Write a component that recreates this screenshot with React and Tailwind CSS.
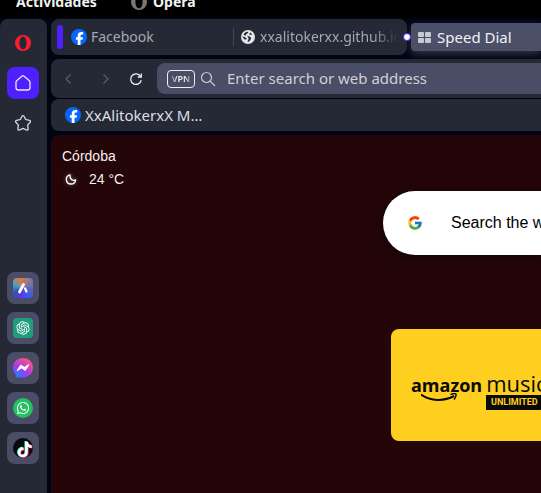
import React from "react";
import { FcGoogle } from "react-icons/fc";
import { FaWhatsapp, FaTiktok } from "react-icons/fa";
import { RiOpenaiFill } from "react-icons/ri";

function FacebookIcon() {
  return (
    <svg viewBox="0 0 16 16" className="size-4 shrink-0" aria-hidden="true">
      <circle cx="8" cy="8" r="8" fill="#0866ff" />
      <path
        d="M6.7 16v-5.3H4.9V8.2h1.8V7c0-2.7 1.2-3.9 3.8-3.9.5 0 1.3.1 1.7.2v2.2h-.9c-1.3 0-1.8.5-1.8 1.7v1H12l-.4 2.5H9.5V16z"
        fill="#fff"
      />
    </svg>
  );
}

function GlobeIcon() {
  return (
    <svg viewBox="0 0 14 14" className="size-[14px] shrink-0" aria-hidden="true">
      <circle cx="7" cy="7" r="7" fill="#e4e6ea" />
      <path d="M3 3.400 5.800 1.600 7.500 2.400 5.500 4 4.600 5.400 2.800 5.200z" fill="#252936" />
      <path d="M1.200 6.200 3.400 7 5.600 8.200 5.400 9.400 3.400 9.600z" fill="#252936" />
      <path d="M6 5.800 8.600 6.400 10.200 8 9.400 10 7.400 12 6.400 11.400 7.400 9.400 7.600 8z" fill="#252936" />
      <path d="M9 2.600 11 4 10.200 5 8.200 4.400z" fill="#252936" />
    </svg>
  );
}

function OperaIcon({ className, color }) {
  return (
    <svg viewBox="0 0 16 16" className={className} aria-hidden="true">
      <path
        fill={color}
        fillRule="evenodd"
        d="M8 0a8 8 0 1 0 0 16A8 8 0 0 0 8 0M8 1.700c2.200 0 3.600 2.700 3.600 6.300s-1.400 6.300-3.600 6.300-3.600-2.700-3.600-6.300S5.800 1.700 8 1.700"
      />
    </svg>
  );
}

function AriaIcon() {
  return (
    <span className="grid size-5 place-items-center overflow-hidden rounded bg-[conic-gradient(from_20deg,#9a8190,#5262b8_25%,#3a55ff_38%,#5e35d8_50%,#2a55b5_62%,#4aa3b9_75%,#d27b54_88%,#c96f4c)]">
      <svg viewBox="0 0 20 20" className="size-5" fill="none" stroke="#fff" strokeLinecap="round" aria-hidden="true">
        <path d="M6.500 14 10.500 6.500" strokeWidth="2.800" />
        <path d="M12 10.500 13.500 13.500" strokeWidth="2.200" />
      </svg>
    </span>
  );
}

function MessengerIcon() {
  return (
    <svg viewBox="0 0 24 24" className="size-5" aria-hidden="true">
      <defs>
        <radialGradient id="messenger" cx=".15" cy="1" r="1.150">
          <stop offset="0" stopColor="#0695ff" />
          <stop offset=".5" stopColor="#a334fa" />
          <stop offset="1" stopColor="#ff5c70" />
        </radialGradient>
      </defs>
      <path d="M4 6h16v11H4z" fill="#fff" />
      <path
        fill="url(#messenger)"
        d="M12 0C5.24 0 0 4.952 0 11.64c0 3.499 1.434 6.521 3.769 8.61a.96.96 0 0 1 .323.683l.065 2.135a.96.96 0 0 0 1.347.85l2.381-1.053a.96.96 0 0 1 .641-.046A13 13 0 0 0 12 23.28c6.76 0 12-4.952 12-11.64S18.76 0 12 0m6.806 7.44c.522-.03.971.567.63 1.094l-4.178 6.457a.707.707 0 0 1-.977.208l-3.87-2.504a.44.44 0 0 0-.49.007l-4.363 3.01c-.637.438-1.415-.317-.995-.966l4.179-6.457a.706.706 0 0 1 .977-.21l3.87 2.505c.15.097.344.094.491-.007l4.362-3.008a.7.7 0 0 1 .364-.13"
      />
    </svg>
  );
}

const apps = [
  { name: "Aria", icon: <AriaIcon /> },
  {
    name: "ChatGPT",
    icon: (
      <span className="grid size-5 place-items-center rounded bg-[#219c7d] text-white">
        <RiOpenaiFill className="size-4" />
      </span>
    ),
  },
  { name: "Messenger", icon: <MessengerIcon /> },
  {
    name: "WhatsApp",
    icon: (
      <span className="grid size-5 place-items-center rounded-full bg-[#25c160] text-white">
        <FaWhatsapp className="size-[14px]" />
      </span>
    ),
  },
  {
    name: "TikTok",
    icon: (
      <span className="grid size-5 place-items-center rounded-full bg-[#080a0c]">
        <svg viewBox="0 0 20 20" className="size-5" aria-hidden="true">
          <FaTiktok x="3" y="3" width="13" height="13" color="#25f4ee" />
          <FaTiktok x="4.500" y="4" width="13" height="13" color="#fe2c55" />
          <FaTiktok x="3.700" y="3.500" width="13" height="13" color="#fff" />
        </svg>
      </span>
    ),
  },
];

function Sidebar() {
  return (
    <aside className="flex w-[47px] shrink-0 flex-col items-start rounded-t-lg bg-[#252936] pt-2 pb-[29px] pl-[7px]">
      <nav className="flex flex-col gap-2" aria-label="Sidebar">
        <button className="grid size-8 place-items-center" aria-label="Opera menu">
          <OperaIcon className="size-4" color="#ff1b2d" />
        </button>
        <button className="grid size-8 place-items-center rounded-lg bg-[#4f20ff]" aria-label="Home">
          <svg viewBox="0 0 16 16" className="size-4" fill="none" stroke="#eeeaff" strokeWidth="1.300" strokeLinejoin="round" aria-hidden="true">
            <path d="M7.200 1 1.900 5.400c-.6.500-.9 1-.9 1.800v5.300C1 14 2 15 3.500 15h9c1.500 0 2.500-1 2.500-2.500V7.200c0-.8-.3-1.300-.9-1.800L8.800 1c-.5-.4-1.100-.4-1.600 0z" />
          </svg>
        </button>
        <button className="grid size-8 place-items-center" aria-label="Pinboards">
          <svg viewBox="0 0 18 18" className="size-[18px]" fill="none" stroke="#d9dbe2" strokeWidth="1.300" strokeLinejoin="round" aria-hidden="true">
            <path d="M8 2.300c.4-.8 1.600-.8 2 0l1.500 2.800c.2.300.5.500.8.600l3.200.6c.9.200 1.300 1.200.7 1.900l-2.200 2.400c-.2.300-.3.600-.3.900l.4 3.300c.1.900-.8 1.600-1.600 1.200l-3-1.400a1.200 1.200 0 0 0-1 0L5.500 16c-.8.400-1.700-.3-1.600-1.200l.4-3.300c0-.3-.1-.6-.3-.9L1.800 8.200c-.6-.7-.2-1.700.7-1.900l3.200-.6c.3-.1.600-.3.800-.6z" />
          </svg>
        </button>
      </nav>
      <div className="mt-auto flex flex-col gap-2">
        {apps.map((app) => (
          <button key={app.name} aria-label={app.name} className="grid size-8 place-items-center rounded-lg bg-[#4a4d65]">
            {app.icon}
          </button>
        ))}
      </div>
    </aside>
  );
}

function Tabs() {
  return (
    <div className="flex h-9 items-center gap-1" role="tablist">
      <div className="relative flex h-9 w-[356px] shrink-0 items-center rounded-lg bg-[#252936] pl-[6px] text-sm text-[#a6a8ad]">
        <span className="h-6 w-[6px] rounded-sm bg-[#4f20ff]" />
        <button role="tab" aria-selected="false" className="ml-2 flex w-[162px] items-center gap-1">
          <FacebookIcon />
          Facebook
        </button>
        <span className="h-[18px] w-px bg-[#454854]" />
        <button
          role="tab"
          aria-selected="false"
          className="ml-[7px] flex min-w-0 flex-1 items-center gap-[5px] overflow-hidden whitespace-nowrap"
        >
          <GlobeIcon />
          <span className="w-[139px] overflow-hidden text-left [mask-image:linear-gradient(to_right,#000_112px,transparent_139px)]">
            xxalitokerxx.github.io
          </span>
        </button>
        <span className="absolute top-[14px] -right-1 size-2 rounded-full border border-[#4f20ff] bg-white" />
      </div>
      <button
        role="tab"
        aria-selected="true"
        className="flex h-7 min-w-0 flex-1 items-center gap-[6px] rounded-l bg-[#4c4f68] pl-[7px] text-[15px] whitespace-nowrap text-[#f0f0f3] shadow-[0_3px_8px_#34374a]"
      >
        <svg viewBox="0 0 13 11" className="h-[11px] w-[13px] shrink-0" fill="#c9cad1" aria-hidden="true">
          <rect width="6" height="5" rx="1" />
          <rect x="7" width="6" height="5" rx="1" />
          <rect y="6" width="6" height="5" rx="1" />
          <rect x="7" y="6" width="6" height="5" rx="1" />
        </svg>
        Speed Dial
      </button>
    </div>
  );
}

function Toolbar() {
  return (
    <div className="relative mt-1 flex h-[39px] items-center rounded-l-lg bg-[#252936] pl-[6px]">
      <button aria-label="Back" className="grid h-8 w-[22px] place-items-center text-[#5c5f6b]">
        <svg viewBox="0 0 6 10" className="h-[10px] w-[6px]" fill="none" stroke="currentColor" strokeWidth="1.200" aria-hidden="true">
          <path d="M5.500.5 1 5l4.500 4.500" />
        </svg>
      </button>
      <button aria-label="Forward" className="ml-4 grid h-8 w-[22px] place-items-center text-[#5c5f6b]">
        <svg viewBox="0 0 6 10" className="h-[10px] w-[6px]" fill="none" stroke="currentColor" strokeWidth="1.200" aria-hidden="true">
          <path d="M.5.5 5 5 .5 9.500" />
        </svg>
      </button>
      <button aria-label="Reload" className="ml-2 grid h-8 w-[22px] place-items-center text-[#f0f0f3]">
        <svg viewBox="0 0 14 14" className="size-[14px]" fill="none" stroke="currentColor" strokeWidth="1.300" aria-hidden="true">
          <path d="M12.200 8.200A5.300 5.300 0 1 1 11.500 4.300" />
          <path d="M12.300 1.500v3.500H8.800" />
        </svg>
      </button>
      <div className="ml-[10px] flex h-[31px] min-w-0 flex-1 items-center rounded-l-lg bg-[#4a4d66] pl-[10px]">
        <button className="flex h-[18px] w-7 shrink-0 items-center justify-center rounded border border-[#eeeef2] text-[9px] font-semibold text-[#eeeef2]">
          <span className="[mask-image:linear-gradient(to_right,#0006,#000_30%,#000_70%,#0006)]">VPN</span>
        </button>
        <svg viewBox="0 0 16 16" className="ml-[5px] size-4 shrink-0" fill="none" stroke="#c8c9d1" strokeWidth="1.200" aria-hidden="true">
          <circle cx="6.500" cy="6.500" r="5" />
          <path d="m10.200 10.200 4.800 4.800" />
        </svg>
        <input
          aria-label="Enter search or web address"
          placeholder="Enter search or web address"
          className="ml-[11px] min-w-0 flex-1 bg-transparent text-[15px] outline-none placeholder:text-[#cfd0d5]"
        />
      </div>
    </div>
  );
}

function Weather() {
  return (
    <section className="pt-[11px] pl-[11px] font-['Liberation_Sans',Arial,sans-serif] text-sm leading-5 text-[#f3eeee]">
      <p>Córdoba</p>
      <p className="mt-[3px] flex items-center gap-3">
        <svg viewBox="0 0 14 14" className="ml-[2px] size-[13px] drop-shadow-[0_0_2px_#fff6]" fill="none" stroke="#fff" strokeWidth="1.500" strokeLinejoin="round" aria-hidden="true">
          <path d="M6.500 2A5 5 0 1 0 12.500 7.500C9 9 6 6.500 6.500 2z" />
        </svg>
        24 °C
      </p>
    </section>
  );
}

function AmazonTile() {
  return (
    <a
      href="#amazon-music"
      aria-label="Amazon Music Unlimited"
      className="mt-[74px] ml-[340px] flex h-28 w-48 flex-col rounded-lg bg-[#ffcf20] pt-[42px] pl-5 whitespace-nowrap text-[#0a0a0a]"
    >
      <span className="flex items-baseline gap-1 font-['Open_Sans',sans-serif] leading-6">
        <span className="text-lg leading-6 font-bold">amazon</span>
        <span className="text-[22px]">music</span>
      </span>
      <span className="-mt-1 flex items-start">
        <svg viewBox="0 0 40 9" className="ml-[10px] h-[9px] w-10 shrink-0" fill="none" stroke="#0a0a0a" aria-hidden="true">
          <path d="M0 1.500C10 8.500 23 8.500 33 3" strokeWidth="2" />
          <path d="M29.500 1.500c3-1 5-1 5.500-.5s-.5 3.500-2 5.500" strokeWidth="1.500" />
        </svg>
        <span className="mt-[2px] ml-[25px] h-[15px] rounded-br bg-[#0a0a0a] px-[5px] font-['Roboto',sans-serif] text-[9px] leading-[15px] font-bold text-[#ffcf20]">
          UNLIMITED
        </span>
      </span>
    </a>
  );
}

export default function App() {
  return (
    <div className="flex h-screen flex-col overflow-hidden bg-[#010413] font-['Noto_Sans',sans-serif]">
      <header className="flex h-[18px] shrink-0 items-start bg-black pl-4 text-sm font-bold text-[#f2f2f2]">
        <span className="-mt-2 w-[115px] leading-5">Actividades</span>
        <span className="-mt-2 flex items-center gap-[6px] leading-5">
          <OperaIcon className="size-4" color="#777" />
          Opera
        </span>
      </header>
      <div className="flex min-h-0 flex-1 gap-1 pt-px">
        <Sidebar />
        <main className="flex min-w-0 flex-1 flex-col">
          <Tabs />
          <Toolbar />
          <div className="mt-px flex h-8 shrink-0 items-center rounded-l-lg bg-[#252936] pl-[14px] text-[15px] text-[#dedfe3]">
            <a href="#bookmark" className="flex items-center gap-1">
              <FacebookIcon />
              XxAlitokerxX M…
            </a>
          </div>
          <div className="mt-1 min-h-0 flex-1 overflow-hidden rounded-tl-lg bg-[#240609]">
            <Weather />
            <label className="mt-[2px] ml-[332px] flex h-16 items-center overflow-hidden rounded-l-full bg-white pl-6 shadow-[0_2px_12px_#0008]">
              <FcGoogle className="size-4 shrink-0" />
              <input
                aria-label="Search the web"
                placeholder="Search the web"
                className="ml-7 min-w-0 flex-1 bg-transparent font-['Liberation_Sans',Arial,sans-serif] text-base outline-none placeholder:text-black"
              />
            </label>
            <AmazonTile />
          </div>
        </main>
      </div>
    </div>
  );
}
